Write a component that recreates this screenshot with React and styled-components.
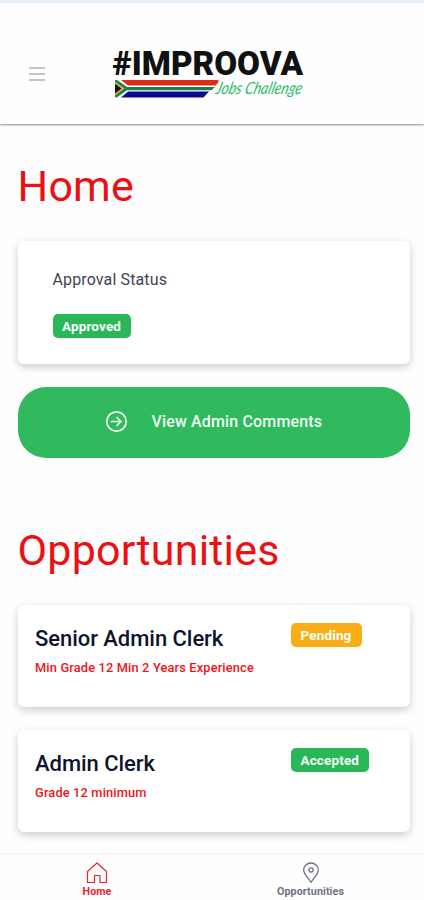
import React from 'react';
import styled, { createGlobalStyle } from 'styled-components';

const GlobalStyle = createGlobalStyle`
* {
    box-sizing: border-box;
}
body {
    margin: 0;
    background-color: #fefefe;
    font-family: Roboto, sans-serif;
}
`;

const Screen = styled.div`
width: 100%;
height: 100vh;
display: flex;
flex-direction: column;
overflow: hidden;
`;

const StatusStrip = styled.div`
flex: none;
height: 3px;
background-color: #e9f1fb;
`;

const Header = styled.header`
flex: none;
height: 121px;
display: flex;
align-items: flex-start;
padding: 37px 0 0 29px;
background-color: #fefefe;
box-shadow: 0 1px 2px rgba(0,0,0,0.45);
`;

const MenuButton = styled.button`
width: 16px;
height: 14px;
margin: 27px 65px 0 0;
padding: 0;
border: none;
background: none;
display: flex;
flex-direction: column;
justify-content: space-between;

span {
    height: 2px;
    background-color: #c6c6c6;
}
`;

const LogoSvg = styled.svg`
flex: none;
overflow: visible;
`;

const Content = styled.main`
flex: 1;
min-height: 0;
padding: 37px 14px 0 17.5px;
`;

const Heading = styled.h1`
margin: 0;
height: 50px;
line-height: 50px;
font-size: 43px;
font-weight: 400;
letter-spacing: 0.2px;
color: #ee0f12;
`;

const Card = styled.section`
background-color: #fff;
border-radius: 6px;
box-shadow: 0 3px 8px rgba(0,0,0,0.2);
`;

const StatusCard = styled(Card)`
height: 123px;
margin-top: 30px;
padding: 29px 35px 0;

p {
    margin: 0 0 24px;
    line-height: 20px;
    font-size: 16px;
    letter-spacing: 0.13px;
    color: #3e4654;
}
`;

const Badge = styled.span`
display: block;
width: ${props => props.$width};
height: 24px;
line-height: 24px;
border-radius: 5px;
text-align: center;
font-size: 13.5px;
font-weight: 700;
letter-spacing: 0.15px;
color: #f4fff7;
background-color: ${props => props.$pending ? '#f9ae17' : '#29b757'};
`;

const CommentsButton = styled.button`
width: 100%;
height: 71px;
margin: 23px 0 67px;
padding: 0 0 2px 87px;
border: none;
border-radius: 28px;
display: flex;
align-items: center;
gap: 24px;
background-color: #30b95d;
color: #effff3;
font-family: inherit;
font-size: 16px;
font-weight: 500;
letter-spacing: 0.15px;
`;

const JobCard = styled(Card)`
height: 102px;
margin-top: ${props => props.$first ? '30px' : '23px'};
padding: 18px 0 0 17.5px;
display: flex;
`;

const JobText = styled.div`
width: 255.5px;

h2 {
    margin: 2.5px 0 8.5px;
    line-height: 26px;
    font-size: 22px;
    font-weight: 500;
    letter-spacing: -0.05px;
    color: #0d152e;
}
p {
    margin: 0;
    line-height: 16px;
    font-size: 12.8px;
    font-weight: 500;
    letter-spacing: 0.16px;
    color: #ee1520;
    white-space: nowrap;
}
`;

const TabBar = styled.nav`
flex: none;
height: 45px;
display: flex;
background-color: #fefefe;
box-shadow: 0 -1px 3px rgba(0,0,0,0.07);
`;

const Tab = styled.a`
flex: none;
width: ${props => props.$width};
padding: 7px 0 0 ${props => props.$active ? '0' : '3px'};
display: flex;
flex-direction: column;
align-items: center;
font-size: 10.7px;
font-weight: 700;
letter-spacing: 0.1px;
line-height: 13px;
color: ${props => props.$active ? '#e5242b' : '#6d7480'};

svg {
    margin-bottom: 1px;
}
`;

const Logo = () => (
    <LogoSvg width="210" height="70" viewBox="-2 -8 210 70" role="img" aria-label="Improova Jobs Challenge">
        <text x="0.5" y="27" fontFamily="Roboto, sans-serif" fontSize="33" fontWeight="900" fill="#111" textLength="190.5" lengthAdjust="spacingAndGlyphs">#IMPROOVA</text>
        <path d="M9 32H106.5C107 34 105 36 103.5 37.5H16Z" fill="#de2a18" />
        <path d="M16 43.5H97L91.5 49.5H9Z" fill="#0a0b91" />
        <path d="M5 32L15 39H103L99.5 42.3H15L5 49.3H3V32Z" fill="#16804f" />
        <path d="M3 33.5L12.5 40.6L3 47.8Z" fill="#e9ad37" />
        <path d="M3 35.7L9.5 40.6L3 45.6Z" fill="#111" />
        <text transform="translate(103 46) skewX(-14)" fontFamily="Lato, sans-serif" fontSize="17" fontWeight="400" fontStyle="italic" fill="#29bd68" textLength="86" lengthAdjust="spacingAndGlyphs">Jobs Challenge</text>
    </LogoSvg>
);

const ArrowIcon = () => (
    <svg width="23" height="23" viewBox="0 0 23 23" fill="none" stroke="currentColor" strokeWidth="1.7" strokeLinecap="round" strokeLinejoin="round">
        <circle cx="11.5" cy="11.5" r="9.7" />
        <path d="M6.7 11.5H16M12 7.5L16 11.5L12 15.5" />
    </svg>
);

const HomeIcon = () => (
    <svg width="22" height="22" viewBox="0 0 22 22" fill="none" stroke="currentColor" strokeWidth="1.2" strokeLinejoin="round">
        <path d="M1.5 9.5L11 1L20.5 9.5V20.5H14V13.5H8.5V20.5H1.5Z" />
    </svg>
);

const PinIcon = () => (
    <svg width="22" height="22" viewBox="0 0 22 22" fill="none" stroke="currentColor" strokeWidth="1.3" strokeLinejoin="round">
        <path d="M11 20.5C9 16.5 3.7 12.7 3.7 8C3.7 4 7 1 11 1S18.3 4 18.3 8C18.3 12.7 13 16.5 11 20.5Z" />
        <circle cx="11" cy="8" r="2.1" />
    </svg>
);

const jobs = [
    { title: 'Senior Admin Clerk', requirement: 'Min Grade 12 Min 2 Years Experience', status: 'Pending', width: '71px' },
    { title: 'Admin Clerk', requirement: 'Grade 12 minimum', status: 'Accepted', width: '78.5px' },
];

const App = () => {
    return (
        <Screen>
            <GlobalStyle />
            <StatusStrip />
            <Header>
                <MenuButton aria-label="Menu">
                    <span />
                    <span />
                    <span />
                </MenuButton>
                <Logo />
            </Header>
            <Content>
                <Heading>Home</Heading>
                <StatusCard>
                    <p>Approval Status</p>
                    <Badge $width="78px">Approved</Badge>
                </StatusCard>
                <CommentsButton>
                    <ArrowIcon />
                    View Admin Comments
                </CommentsButton>
                <Heading>Opportunities</Heading>
                {jobs.map((job, index) => (
                    <JobCard key={job.title} $first={index === 0}>
                        <JobText>
                            <h2>{job.title}</h2>
                            <p>{job.requirement}</p>
                        </JobText>
                        <Badge $width={job.width} $pending={job.status === 'Pending'}>{job.status}</Badge>
                    </JobCard>
                ))}
            </Content>
            <TabBar>
                <Tab $active $width="194px">
                    <HomeIcon />
                    Home
                </Tab>
                <Tab $width="230px">
                    <PinIcon />
                    Opportunities
                </Tab>
            </TabBar>
        </Screen>
    )
}

export default App;
